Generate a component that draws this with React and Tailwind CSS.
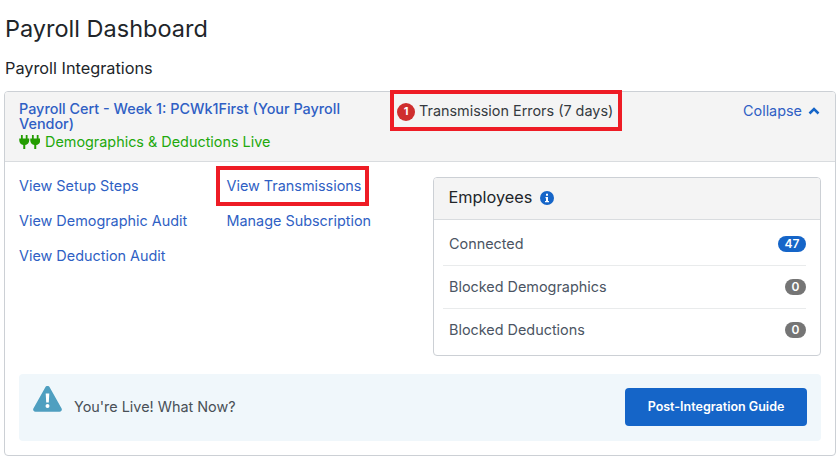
import React from 'react';

const PlugIcon = () => (
  <svg width="10.500" height="14" viewBox="0 0 10 14" className="shrink-0">
    <path fill="#239c00" d="M1.700 0h1.800v3.500H1.700zM6.500 0h1.800v3.500H6.500zM0 3.500h10v1.800C10 8 8.300 9.700 6 10v4H4v-4C1.700 9.700 0 8 0 5.300z" />
  </svg>
);

const Badge = ({ children, color }) => (
  <span className={`flex h-4 min-w-[20px] items-center justify-center rounded-full px-[6.500px] text-[12px] font-semibold leading-none text-white ${color}`}>
    {children}
  </span>
);

const Row = ({ label, count, color, last }) => (
  <div className={`flex h-[43px] items-center justify-between border-b pl-[6px] ${last ? 'border-transparent' : 'border-[#e9ebec]'}`}>
    <span className="text-[#4b5563]">{label}</span>
    <Badge color={color}>{count}</Badge>
  </div>
);

const App = () => {
  return (
    <div className="relative h-[456px] w-[838px] overflow-hidden bg-white font-['Inter',sans-serif] text-[14.4px] text-[#212529]">
      <div className="pl-[5px] pt-[14px]">
        <h1 className="text-[23.5px] leading-[29px] text-[#212529]">Payroll Dashboard</h1>
        <h2 className="mt-[16px] text-[16.3px] leading-[19px]">Payroll Integrations</h2>
      </div>

      <div className="ml-[4px] mt-[13px] w-[832px] overflow-hidden rounded-[4px] border border-[#ccd0d5]">
        <div className="flex h-[70px] border-b border-[#d9dcdf] bg-[#f4f4f4] pl-[14px] pr-[15px] pt-[9px]">
          <div className="w-[372px] shrink-0 leading-[15px]">
            <a className="block w-[350px] font-medium text-[#2f5fc4]">Payroll Cert - Week 1: PCWk1First (Your Payroll Vendor)</a>
            <div className="mt-[2px] flex items-center leading-[17px] text-[#22a90c]">
              <PlugIcon />
              <PlugIcon />
              <span className="ml-[5px]">Demographics &amp; Deductions Live</span>
            </div>
          </div>
          <div className="ml-[6px] mt-[1px] flex h-[17px] items-center gap-[4px] text-[#343a40]">
            <span className="mt-[2px] flex h-[18px] w-[18px] items-center justify-center rounded-full bg-[#cf2e2e] text-[11px] font-bold text-white">1</span>
            <span>Transmission Errors (7 days)</span>
          </div>
          <div className="ml-auto mt-[1px] flex h-[17px] items-center gap-[6px] text-[#2f5fc4]">
            <span>Collapse</span>
            <svg width="12" height="8" viewBox="0 0 12 8">
              <path d="M1.500 6.500 6 2l4.500 4.500" fill="none" stroke="#1565c8" strokeWidth="2.500" />
            </svg>
          </div>
        </div>

        <div className="flex pl-[14px] pt-[15px]">
          <div className="flex w-[207.500px] shrink-0 flex-col gap-[18px] leading-[17px] text-[#2f5fc4]">
            <a>View Setup Steps</a>
            <a>View Demographic Audit</a>
            <a>View Deduction Audit</a>
          </div>
          <div className="flex w-[206.500px] shrink-0 flex-col gap-[18px] leading-[17px] text-[#2f5fc4]">
            <a>View Transmissions</a>
            <a>Manage Subscription</a>
          </div>
          <div className="h-[179px] w-[388px] shrink-0 overflow-hidden rounded-[4px] border border-[#ccd0d5]">
            <div className="flex h-[42px] items-center gap-[8px] border-b border-[#d9dcdf] bg-[#f4f4f4] px-[14.500px] pb-[2px] text-[16.3px]">
              Employees
              <svg width="14" height="14" viewBox="0 0 14 14">
                <circle cx="7" cy="7" r="7" fill="#1565c8" />
                <path fill="#fff" d="M6 2.800h2v2H6zM5.500 6h2.500v4h1v1.300H5V10h1V7.300h-.5z" />
              </svg>
            </div>
            <div className="pl-[9px] pr-[14px] pt-[3px]">
              <Row label="Connected" count="47" color="bg-[#1565c8]" />
              <Row label="Blocked Demographics" count="0" color="bg-[#757575]" />
              <Row label="Blocked Deductions" count="0" color="bg-[#757575]" last />
            </div>
          </div>
        </div>

        <div className="mx-[14px] mb-[14px] mt-[18px] flex h-[67px] items-center justify-between rounded-[4px] bg-[#f0f7fb] pl-[14px] pr-[14px]">
          <div className="flex items-start">
            <svg width="29" height="26" viewBox="0 0 29 26" className="-mt-[11px]">
              <path fill="#4f9fc0" d="M14.500 0c1 0 1.800.5 2.300 1.400l11.800 21c.8 1.500-.2 3.300-2 3.300H2.400c-1.800 0-2.800-1.800-2-3.300l11.800-21C12.700.500 13.500 0 14.500 0z" />
              <path fill="#fff" d="M12.700 7.500h3.600l-.5 9h-2.600zM14.500 18a2 2 0 1 1 0 4 2 2 0 0 1 0-4z" />
            </svg>
            <span className="ml-[12px] -mt-[1px] text-[#495057]">You're Live! What Now?</span>
          </div>
          <button className="mb-[1px] h-[38px] w-[182px] rounded-[4px] bg-[#1565c8] text-[12.500px] font-semibold text-white">
            Post-Integration Guide
          </button>
        </div>
      </div>

      <div className="absolute left-[390px] top-[90px] h-[41px] w-[232px] border-[4px] border-[#ee1c25]" />
      <div className="absolute left-[216px] top-[166px] h-[40px] w-[153px] border-[4px] border-[#ee1c25]" />
    </div>
  );
};

export default App;
